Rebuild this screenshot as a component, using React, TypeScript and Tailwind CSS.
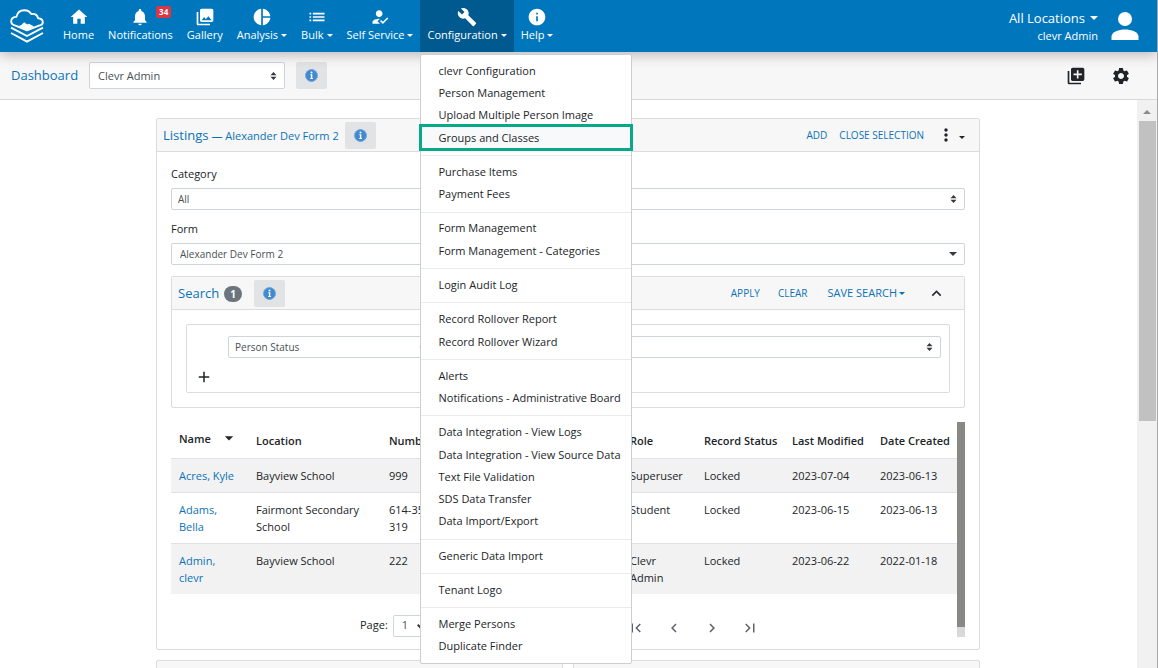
import { useId, useState } from "react";
import type { ReactNode, ComponentType } from "react";
import {
  MdAdd,
  MdArrowDropDown,
  MdBuild,
  MdChevronLeft,
  MdChevronRight,
  MdFirstPage,
  MdHome,
  MdHowToReg,
  MdInfo,
  MdKeyboardArrowUp,
  MdLastPage,
  MdLibraryAdd,
  MdList,
  MdMoreVert,
  MdNotifications,
  MdPhotoLibrary,
  MdPieChart,
  MdSettings,
} from "react-icons/md";

type NavEntry = {
  label: string;
  icon: ComponentType<{ className?: string }>;
  caret?: boolean;
  badge?: string;
  menu?: string[][];
};

const configurationMenu: string[][] = [
  ["clevr Configuration", "Person Management", "Upload Multiple Person Image", "Groups and Classes"],
  ["Purchase Items", "Payment Fees"],
  ["Form Management", "Form Management - Categories"],
  ["Login Audit Log"],
  ["Record Rollover Report", "Record Rollover Wizard"],
  ["Alerts", "Notifications - Administrative Board"],
  [
    "Data Integration - View Logs",
    "Data Integration - View Source Data",
    "Text File Validation",
    "SDS Data Transfer",
    "Data Import/Export",
  ],
  ["Generic Data Import"],
  ["Tenant Logo"],
  ["Merge Persons", "Duplicate Finder"],
];

const navEntries: NavEntry[] = [
  { label: "Home", icon: MdHome },
  { label: "Notifications", icon: MdNotifications, badge: "34" },
  { label: "Gallery", icon: MdPhotoLibrary },
  { label: "Analysis", icon: MdPieChart, caret: true },
  { label: "Bulk", icon: MdList, caret: true },
  { label: "Self Service", icon: MdHowToReg, caret: true },
  { label: "Configuration", icon: MdBuild, caret: true, menu: configurationMenu },
  { label: "Help", icon: MdInfo, caret: true },
];

const rows = [
  { name: "Acres, Kyle", location: "Bayview School", number: "999", role: "Superuser", status: "Locked", modified: "2023-07-04", created: "2023-06-13" },
  { name: "Adams, Bella", location: "Fairmont Secondary School", number: "614-353- 319", role: "Student", status: "Locked", modified: "2023-06-15", created: "2023-06-13" },
  { name: "Admin, clevr", location: "Bayview School", number: "222", role: "Clevr Admin", status: "Locked", modified: "2023-06-22", created: "2022-01-18" },
];

function Caret({ className = "" }: { className?: string }) {
  return (
    <svg viewBox="0 0 6 3" className={`h-[3px] w-[6px] shrink-0 fill-current ${className}`} aria-hidden="true">
      <path d="M0 0h6L3 3z" />
    </svg>
  );
}

function Logo() {
  return (
    <svg viewBox="0 0 34 34" className="h-[34px] w-[34px]" fill="none" stroke="#fff" strokeWidth="1.900" aria-hidden="true">
      <path d="M5.500 16.600C2.800 16 1.200 14.400 1.200 12.200C1.200 9.600 3.400 7.800 6.400 7.900C7.300 3.600 10.600 1.200 14.400 1.200C17.400 1.200 19.900 2.700 21.300 5.100C24.700 4.200 27.600 6.100 28 9.200C31 9.400 32.800 11.100 32.800 13.300C32.800 15.200 31 16.400 28.400 16.800L17 21.400Z" strokeLinejoin="round" />
      <path d="M8.500 17L11 16.300L14.200 13.200L17.200 15.400L19 14.800L24 17.600L17 21Z" fill="#fff" stroke="none" />
      <path d="M1 18.600L17 27L33 18.600M1 24L17 32.600L33 24" />
    </svg>
  );
}

function InfoButton({ label }: { label: string }) {
  return (
    <button type="button" aria-label={label} className="flex h-[27px] w-[31px] shrink-0 items-center justify-center rounded-xs bg-[#e2e3e5]">
      <svg viewBox="0 0 13 13" className="h-[13px] w-[13px]" aria-hidden="true">
        <circle cx="6.500" cy="6.500" r="6" fill="#4389cf" stroke="#72a7dc" />
        <circle cx="6.500" cy="3.600" r="1" fill="#fff" />
        <path d="M5.300 5.300h2v3.700h.7v.9H5.200V9h.7V6.200h-.6z" fill="#fff" />
      </svg>
    </button>
  );
}

function SortArrows() {
  return (
    <svg viewBox="0 0 7 8" className="pointer-events-none absolute top-1/2 right-2 h-2 w-[7px] -translate-y-1/2" fill="#343a40" aria-hidden="true">
      <path d="M3.500 0L6.500 3.300H.5zM3.500 8L.5 4.700h6z" />
    </svg>
  );
}

function SelectBox({ id, label, value, size, arrow = "sort" }: { id: string; label?: string; value: string; size: string; arrow?: "sort" | "drop" }) {
  return (
    <div className="relative">
      <select
        id={id}
        aria-label={label}
        defaultValue={value}
        className={`w-full appearance-none rounded-xs border border-[#ced4da] bg-white pr-6 text-[#495057] ${size}`}
      >
        <option value={value}>{value}</option>
      </select>
      {arrow === "sort" ? <SortArrows /> : (
        <svg viewBox="0 0 8 4" className="pointer-events-none absolute top-1/2 right-2 h-1 w-2 -translate-y-1/2" fill="#343a40" aria-hidden="true">
          <path d="M0 0h8L4 4z" />
        </svg>
      )}
    </div>
  );
}

function DropMenu({ groups, current }: { groups: string[][]; current: string }) {
  return (
    <div className="absolute top-[54px] left-0 z-20 flex h-[calc(100vh-58px)] max-h-[610px] w-[212px] flex-col rounded-xs border border-[#ccced1] bg-white py-[5px] text-[#212529]">
      {groups.map((group, index) => (
        <ul key={group[0]} className="contents">
          {index > 0 && <li role="separator" className="mt-[6px] mb-[5px] h-px shrink-0 bg-[#e9ecef]" />}
          {group.map((item) => (
            <li key={item} className="relative flex flex-1">
              <a href="#" className={`flex flex-1 items-center px-[17px] text-[11px] whitespace-nowrap ${item === current ? "bg-[#f8f9fa]" : ""}`}>
                {item}
              </a>
              {item === current && <span className="pointer-events-none absolute -inset-x-[2px] -top-[3px] -bottom-[2px] border-3 border-[#06a988]" />}
            </li>
          ))}
        </ul>
      ))}
    </div>
  );
}

function NavItem({ entry }: { entry: NavEntry }) {
  const [open, setOpen] = useState(Boolean(entry.menu));
  const Icon = entry.icon;
  return (
    <li className="relative flex">
      <button
        type="button"
        aria-expanded={entry.menu ? open : undefined}
        onClick={() => entry.menu && setOpen(!open)}
        className={`flex flex-col items-center px-[7px] pt-[7px] text-white ${entry.menu && open ? "bg-[#005a8f]" : ""}`}
      >
        <Icon className="size-5" />
        <span className="flex items-center gap-[3px] text-[11px] leading-4 whitespace-nowrap">
          {entry.label}
          {entry.caret && <Caret />}
        </span>
      </button>
      {entry.badge && (
        <span className="absolute top-[6px] left-[55px] rounded-xs bg-[#dc3545] px-[3px] text-[8px] leading-3 font-bold text-white">{entry.badge}</span>
      )}
      {entry.menu && open && <DropMenu groups={entry.menu} current="Groups and Classes" />}
    </li>
  );
}

function TextButton({ children, big = false }: { children: ReactNode; big?: boolean }) {
  return (
    <button type="button" className={`flex items-center gap-[2px] whitespace-nowrap text-[#0b72b9] ${big ? "text-[11px]" : "text-[10px]"}`}>
      {children}
    </button>
  );
}

function TopBar() {
  return (
    <header className="relative z-10 flex h-[52px] shrink-0 items-stretch bg-[#0077bd] pl-[10px] pr-[18px] shadow-[0_3px_12px_rgba(0,0,0,0.25)]">
      <a href="#" aria-label="clevr" className="flex items-center pr-3">
        <Logo />
      </a>
      <nav className="flex">
        <ul className="flex">
          {navEntries.map((entry) => (
            <NavItem key={entry.label} entry={entry} />
          ))}
        </ul>
      </nav>
      <div className="ml-auto flex items-center gap-[13px] text-white">
        <div className="flex flex-col items-end">
          <button type="button" className="flex items-center gap-[5px] text-[13px] leading-5">
            All Locations
            <svg viewBox="0 0 8 4" className="h-1 w-2 fill-current" aria-hidden="true"><path d="M0 0h8L4 4z" /></svg>
          </button>
          <span className="text-[11px] leading-4">clevr Admin</span>
        </div>
        <button type="button" aria-label="Profile">
          <svg viewBox="0 0 28 28" className="size-7" fill="currentColor" aria-hidden="true">
            <circle cx="14" cy="7" r="7" />
            <path d="M.5 28v-3.500C.5 20 8 17.500 14 17.500s13.500 2.500 13.500 7V28z" />
          </svg>
        </button>
      </div>
    </header>
  );
}

function SubBar() {
  return (
    <div className="flex h-12 shrink-0 items-center border-b border-[#d9d9d9] bg-[#f7f7f7] pr-[26px] pl-[11px]">
      <h1 className="w-[78px] pt-px text-[13px] text-[#0b72b9]">Dashboard</h1>
      <div className="w-[196px]">
        <SelectBox id="dashboard" label="Dashboard" value="Clevr Admin" size="h-[27px] pl-2 text-[11px]" />
      </div>
      <div className="ml-[11px] flex">
        <InfoButton label="Dashboard information" />
      </div>
      <div className="ml-auto flex items-center gap-[25px] text-[#212529]">
        <button type="button" aria-label="Add widget"><MdLibraryAdd className="size-5" /></button>
        <button type="button" aria-label="Settings"><MdSettings className="size-5" /></button>
      </div>
    </div>
  );
}

function SearchPanel() {
  return (
    <section className="mt-[11px] rounded-xs border border-[#dcdcdc]">
      <div className="flex h-[33px] items-center border-b border-[#dcdcdc] bg-[#f7f7f7] pr-[18px] pl-[6px]">
        <h3 className="pt-px text-[13px] text-[#0b72b9]">Search</h3>
        <span className="mt-[2px] ml-[5px] rounded-full bg-[#6c757d] px-[6px] text-[10px] leading-4 font-bold text-white">1</span>
        <div className="ml-3"><InfoButton label="Search information" /></div>
        <div className="ml-auto flex items-center">
          <TextButton>APPLY</TextButton>
          <div className="ml-[18px]"><TextButton>CLEAR</TextButton></div>
          <div className="ml-5"><TextButton big>SAVE SEARCH<Caret /></TextButton></div>
          <button type="button" aria-label="Collapse" className="ml-[22px] text-[#212529]"><MdKeyboardArrowUp className="size-[19px]" /></button>
        </div>
      </div>
      <div className="p-[14px]">
        <div className="rounded-xs border border-[#dcdcdc] pt-[11px] pr-2 pb-[6px] pl-[41px]">
          <div className="grid grid-cols-[206px_1fr] gap-3">
            <SelectBox id="criterion" label="Criterion" value="Person Status" size="h-[22px] pl-[6px] text-[10px]" />
            <SelectBox id="condition" label="Condition" value="" size="h-[22px] pl-[6px] text-[10px]" />
          </div>
          <button type="button" aria-label="Add criterion" className="mt-[10px] -ml-[33px] flex text-[#212529]">
            <MdAdd className="size-[18px]" />
          </button>
        </div>
      </div>
    </section>
  );
}

function ListingTable() {
  const head = "px-2 pt-[2px] align-middle font-semibold whitespace-nowrap";
  const cell = "px-2 py-2";
  return (
    <table className="w-full table-fixed border-collapse text-left text-[11px] leading-[17px] text-[#212529]">
      <colgroup>
        <col className="w-[77px]" />
        <col className="w-[133px]" />
        <col />
        <col className="w-[74px]" />
        <col className="w-[88px]" />
        <col className="w-[88px]" />
        <col className="w-[85px]" />
      </colgroup>
      <thead>
        <tr className="h-9 border-b border-[#dee2e6]">
          <th className="px-2 pb-[3px] font-semibold">
            <button type="button" className="flex items-center gap-2 font-semibold">Name<MdArrowDropDown className="size-5" /></button>
          </th>
          <th className={head}>Location</th>
          <th className={head}>Number</th>
          <th className={head}>Role</th>
          <th className={head}>Record Status</th>
          <th className={head}>Last Modified</th>
          <th className={head}>Date Created</th>
        </tr>
      </thead>
      <tbody className="align-top">
        {rows.map((row) => (
          <tr key={row.name} className="border-t border-[#dee2e6] odd:bg-[#f2f2f2]">
            <td className={cell}><a href="#" className="text-[#0b72b9]">{row.name}</a></td>
            <td className={cell}>{row.location}</td>
            <td className={cell}><div className="w-12">{row.number}</div></td>
            <td className={cell}><div className="w-12">{row.role}</div></td>
            <td className={cell}>{row.status}</td>
            <td className={cell}>{row.modified}</td>
            <td className={cell}>{row.created}</td>
          </tr>
        ))}
      </tbody>
    </table>
  );
}

function Pager() {
  const id = useId();
  const step = "flex w-[38px] justify-center text-[#5f6368]";
  return (
    <div className="mt-[21px] flex items-center pl-[189px] text-[11px] text-[#212529]">
      <label htmlFor={id}>Page:</label>
      <div className="relative ml-[5px]">
        <select id={id} defaultValue="1" className="h-[22px] w-10 appearance-none rounded-xs border border-[#ced4da] bg-white pl-2 text-[11px] text-[#495057]">
          <option>1</option>
        </select>
        <svg viewBox="0 0 8 5" className="pointer-events-none absolute top-[9px] right-[8px] h-[5px] w-2" fill="none" stroke="#343a40" strokeWidth="2" aria-hidden="true">
          <path d="M.7.7L4 4L7.300.7" />
        </svg>
      </div>
      <div className="ml-auto flex pt-1 pr-[188px]">
        <button type="button" aria-label="First page" className={step}><MdFirstPage className="size-[18px]" /></button>
        <button type="button" aria-label="Previous page" className={step}><MdChevronLeft className="size-[18px]" /></button>
        <button type="button" aria-label="Next page" className={step}><MdChevronRight className="size-[18px]" /></button>
        <button type="button" aria-label="Last page" className={step}><MdLastPage className="size-[18px]" /></button>
      </div>
    </div>
  );
}

function ListingsCard() {
  return (
    <section className="rounded-xs border border-[#dcdcdc] bg-white">
      <div className="flex h-[33px] items-center border-b border-[#dcdcdc] bg-[#f7f7f7] pr-[14px] pl-[6px]">
        <h2 className="flex items-baseline gap-[3px] pt-[2px] whitespace-nowrap text-[#0b72b9]">
          <span className="text-[13px]">Listings</span>
          <span className="text-[11px]">— Alexander Dev Form 2</span>
        </h2>
        <div className="ml-[6px]"><InfoButton label="Listings information" /></div>
        <div className="ml-auto flex items-center">
          <TextButton>ADD</TextButton>
          <div className="ml-3"><TextButton>CLOSE SELECTION</TextButton></div>
          <button type="button" aria-label="More" className="ml-3 flex items-center text-[#212529]">
            <MdMoreVert className="size-5" />
            <Caret className="mt-1 ml-[3px]" />
          </button>
        </div>
      </div>
      <div className="px-[14px] pt-[14px] pb-3 text-[11px] text-[#212529]">
        <label htmlFor="category" className="block leading-4">Category</label>
        <div className="mt-[6px]">
          <SelectBox id="category" value="All" size="h-[22px] pl-[6px] text-[10px]" />
        </div>
        <label htmlFor="form" className="mt-[11px] block leading-4">Form</label>
        <div className="mt-[6px]">
          <SelectBox id="form" value="Alexander Dev Form 2" size="h-[22px] pl-2 text-[10px]" arrow="drop" />
        </div>
        <SearchPanel />
        <div className="mt-[14px] flex">
          <div className="min-w-0 flex-1">
            <ListingTable />
            <Pager />
          </div>
          <div className="flex w-2 shrink-0 flex-col bg-[#d9d9d9] pb-[10px]">
            <div className="flex-1 bg-[#888885]" />
          </div>
        </div>
      </div>
    </section>
  );
}

export default function App() {
  return (
    <div className="flex h-screen flex-col overflow-hidden border-r border-[#a8a8a8] bg-white font-['Open_Sans',sans-serif]">
      <TopBar />
      <SubBar />
      <div className="flex min-h-0 flex-1">
        <main className="min-w-0 flex-1 overflow-hidden pt-[18px] pr-px">
          <div className="mx-auto flex w-full max-w-[824px] flex-col gap-[10px]">
            <ListingsCard />
            <div className="grid grid-cols-2 gap-[10px]">
              <section className="h-[33px] rounded-xs border border-[#dcdcdc] bg-[#f7f7f7]" />
              <section className="h-[33px] rounded-xs border border-[#dcdcdc] bg-[#f7f7f7]" />
            </div>
          </div>
        </main>
        <div className="flex w-5 shrink-0 flex-col items-center bg-[#f1f1f1] pt-[10px]">
          <svg viewBox="0 0 8 4" className="h-1 w-2" fill="#8b8b8b" aria-hidden="true"><path d="M0 4h8L4 0z" /></svg>
          <div className="mt-[7px] h-[300px] w-[17px] bg-[#c1c1c1]" />
        </div>
      </div>
    </div>
  );
}
